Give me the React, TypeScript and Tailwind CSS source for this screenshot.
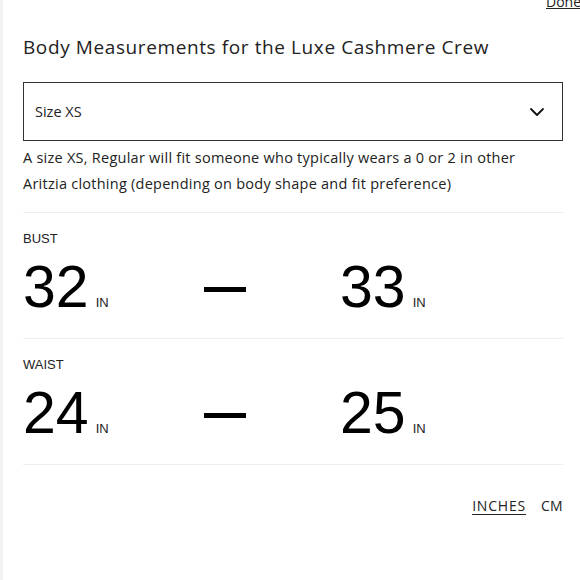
import { ChevronDown } from 'lucide-react';

const rows = [
  { label: 'BUST', from: '32', to: '33' },
  { label: 'WAIST', from: '24', to: '25' },
];

function Value({ n }: { n: string }) {
  return (
    <div className="flex items-baseline">
      <span className="text-[59px] leading-[57px] font-['Liberation_Sans',sans-serif] text-black">{n}</span>
      <span className="ml-[7px] text-[13px] font-['Liberation_Sans',sans-serif] text-[#222]">IN</span>
    </div>
  );
}

export default function App() {
  return (
    <div className="relative w-[580px] h-[580px] overflow-hidden bg-white border-l-[3px] border-[#f3f3f3] font-['Open_Sans',sans-serif] text-[#222]">
      <span className="absolute -top-[9px] left-[543px] text-[14px] underline text-[#222]">Done</span>

      <div className="pl-[20px] w-[560px]">
        <h1 className="pt-[35px] text-[19px] leading-[24px] tracking-[0.6px] text-[#222]">
          Body Measurements for the Luxe Cashmere Crew
        </h1>

        <div className="mt-[23px] h-[59px] border border-[#333] flex items-center justify-between pl-[11px] pr-[13px]">
          <span className="text-[14.5px] text-[#222]">Size XS</span>
          <ChevronDown size={24} strokeWidth={1.8} className="text-[#111]" />
        </div>

        <p className="mt-[4px] text-[14.5px] leading-[26px] tracking-[0.25px] text-[#222]">
          A size XS, Regular will fit someone who typically wears a 0 or 2 in other
          <br />
          Aritzia clothing (depending on body shape and fit preference)
        </p>

        <div className="mt-[15px]">
          {rows.map((r) => (
            <div key={r.label} className="border-t border-[#eeeeee] h-[126px] pt-[18px]">
              <div className="text-[13px] leading-[16px] font-['Liberation_Sans',sans-serif] text-[#222]">
                {r.label}
              </div>
              <div className="mt-[12px] flex items-center">
                <div className="w-[181px]">
                  <Value n={r.from} />
                </div>
                <div className="w-[42px] h-[5px] bg-black mt-[4px]" />
                <div className="ml-[94px]">
                  <Value n={r.to} />
                </div>
              </div>
            </div>
          ))}
          <div className="border-t border-[#eeeeee]" />
        </div>

        <div className="mt-[31px] flex justify-end gap-[15px] text-[14px] leading-[20px] tracking-[0.3px] text-[#222]">
          <span className="underline underline-offset-[3px] tracking-[0.8px]">INCHES</span>
          <span>CM</span>
        </div>
      </div>
    </div>
  );
}
